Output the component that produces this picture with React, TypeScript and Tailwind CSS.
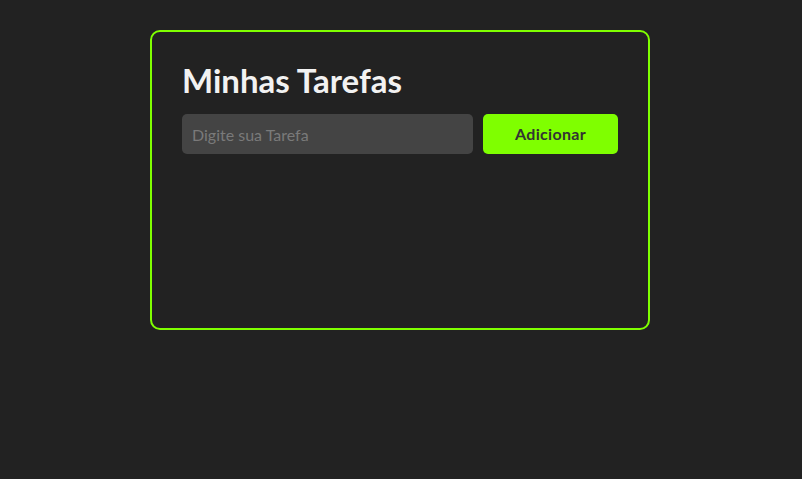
import { useState } from "react";

export default function App() {
  const [task, setTask] = useState("");

  return (
    <div className="flex min-h-screen justify-center bg-[#222222] pt-[30px] pr-[2px] font-['Lato','Liberation_Sans',sans-serif]">
      <div className="h-[300px] w-[500px] rounded-[10px] border-2 border-[#7fff00] p-[30px]">
        <h1 className="mb-[15px] text-[33px] leading-[37px] font-bold text-[#f2f2f2]">Minhas Tarefas</h1>
        <div className="flex gap-[10px]">
          <input
            type="text"
            placeholder="Digite sua Tarefa"
            value={task}
            onChange={(e) => setTask(e.target.value)}
            className="h-10 flex-1 rounded-[5px] bg-[#444444] px-[10px] text-base text-white placeholder-[#7a7a7a] outline-none"
          />
          <button className="h-10 w-[135px] rounded-[5px] bg-[#7fff00] text-base font-bold tracking-[0.3px] text-[#333333]">
            Adicionar
          </button>
        </div>
      </div>
    </div>
  );
}
